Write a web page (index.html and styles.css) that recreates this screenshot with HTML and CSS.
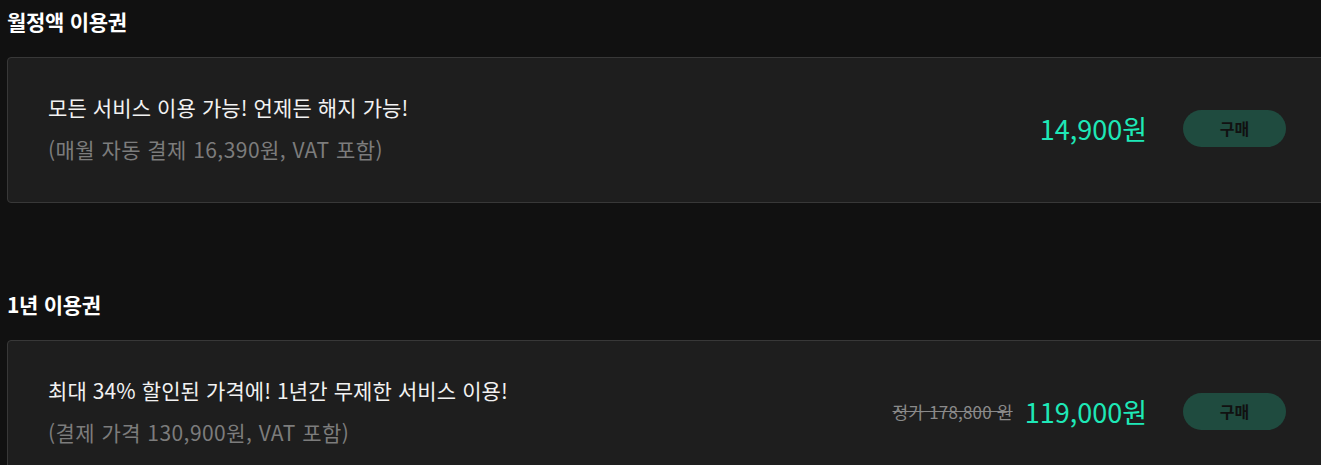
FILE: index.html
```html
<!DOCTYPE html>
<html lang="ko">
<head>
    <meta charset="UTF-8">
    <title>이용권 구매</title>
    <link rel="stylesheet" href="styles.css">
</head>
<body>
    <div class="pass-list">
        <section class="pass-group">
            <h2 class="pass-title">월정액 이용권</h2>
            <div class="pass-card">
                <div class="pass-desc">
                    <p class="pass-main">모든 서비스 이용 가능! 언제든 해지 가능!</p>
                    <p class="pass-sub">(매월 자동 결제 16,390원, VAT 포함)</p>
                </div>
                <div class="pass-buy">
                    <span class="pass-price">14,900원</span>
                    <button class="btn-buy">구매</button>
                </div>
            </div>
        </section>

        <section class="pass-group">
            <h2 class="pass-title">1년 이용권</h2>
            <div class="pass-card">
                <div class="pass-desc">
                    <p class="pass-main">최대 34% 할인된 가격에! 1년간 무제한 서비스 이용!</p>
                    <p class="pass-sub">(결제 가격 130,900원, VAT 포함)</p>
                </div>
                <div class="pass-buy">
                    <span class="pass-origin">정가 178,800 원</span>
                    <span class="pass-price">119,000원</span>
                    <button class="btn-buy">구매</button>
                </div>
            </div>
        </section>
    </div>
</body>
</html>
```

FILE: styles.css
```css
html, body {
    overflow: hidden;
}
body {
    margin: 0;
    padding: 0 0 0 7px;
    background-color: #111111;
    color: #ffffff;
    font-family: "Noto Sans CJK KR", "Noto Sans", sans-serif;
}
.pass-list {
    width: 1360px;
    padding-top: 6px;
}
.pass-group {
    margin-bottom: 86px;
}
.pass-title {
    margin: 0 0 21px 0;
    font-size: 21px;
    line-height: 30px;
    font-weight: bold;
    letter-spacing: -0.3px;
}
.pass-card {
    display: flex;
    align-items: center;
    justify-content: space-between;
    background-color: #1e1e1e;
    border: 1px solid #383838;
    border-radius: 4px;
    padding: 34px 80px 38px 40px;
}
.pass-main, .pass-sub {
    margin: 0;
    font-size: 21px;
    line-height: 30px;
}
.pass-main {
    color: #f2f2f2;
    letter-spacing: 0.1px;
}
.pass-sub {
    margin-top: 12px;
    color: #7c7c7c;
    letter-spacing: 0.45px;
}
.pass-buy {
    display: flex;
    align-items: center;
}
.pass-origin {
    font-size: 17px;
    color: #8a8a8a;
    text-decoration: line-through;
    margin-right: 12px;
    letter-spacing: 0.2px;
}
.pass-price {
    font-size: 27px;
    color: #1ee8b7;
}
.btn-buy {
    margin-left: 36px;
    width: 103px;
    height: 37px;
    border: none;
    border-radius: 19px;
    background-color: #1f4b3f;
    color: #111111;
    font-family: inherit;
    font-size: 16px;
    font-weight: bold;
    cursor: pointer;
}
```
